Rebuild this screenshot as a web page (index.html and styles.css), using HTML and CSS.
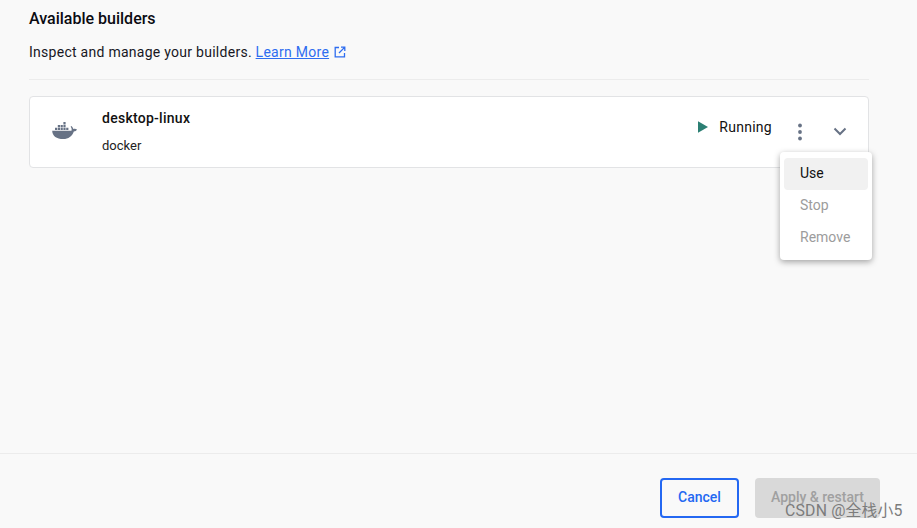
FILE: index.html
```html
<!DOCTYPE html>
<html lang="en">
<head>
<meta charset="utf-8">
<title>Builders</title>
<link rel="stylesheet" href="styles.css">
</head>
<body>
<div class="page">
  <main class="content">
    <h2 class="title">Available builders</h2>
    <p class="intro">Inspect and manage your builders. <a class="link" href="#">Learn More</a> <svg class="ext" viewBox="0 0 12 12" width="12" height="12"><path d="M5 1.500H1.200v9.300h9.300V7M7 1.200h3.800V5M10.600 1.400 5 7" fill="none" stroke="#2e6df0" stroke-width="1.300"/></svg></p>
    <hr class="rule">
    <section class="card">
      <svg class="whale" viewBox="0 0 26 20" width="26" height="21">
        <path fill="#677285" d="M0.200 9.200h19.300c.5-1.600 0-2.900-.9-3.900l.8-.7c1.100.9 1.700 1.800 1.900 3 1.200-.5 2.600-.4 3.700.3-.5 1.200-1.700 1.900-3.200 2-1.600 4.600-5.400 7.600-10.600 7.600C4.600 17.500.4 14.500.2 9.200z"/>
        <path fill="#677285" d="M3 6.200h2.200v2.300H3zM5.800 6.200H8v2.300H5.800zM8.600 6.200h2.200v2.300H8.600zM11.400 6.200h2.200v2.300h-2.200zM14.200 6.200h2.200v2.300h-2.200zM5.800 3.400H8v2.300H5.800zM8.600 3.400h2.200v2.300H8.600zM11.400 3.400h2.200v2.300h-2.200zM11.400.6h2.200v2.300h-2.200z"/>
      </svg>
      <div class="info">
        <div class="name">desktop-linux</div>
        <div class="driver">docker</div>
      </div>
      <div class="status">
        <svg viewBox="0 0 10 12" width="10" height="12"><path fill="#2b7f73" d="M0 .3 10 6 0 11.700z"/></svg>
        <span>Running</span>
      </div>
      <svg class="dots" viewBox="0 0 4 18" width="4" height="18"><circle cx="2" cy="2.500" r="1.900" fill="#677285"/><circle cx="2" cy="9" r="1.900" fill="#677285"/><circle cx="2" cy="15.500" r="1.900" fill="#677285"/></svg>
      <svg class="chev" viewBox="0 0 14 9" width="14" height="9"><path d="M1.500 1.500 7 7l5.500-5.500" fill="none" stroke="#677285" stroke-width="2"/></svg>
      <ul class="menu">
        <li class="item active">Use</li>
        <li class="item off">Stop</li>
        <li class="item off">Remove</li>
      </ul>
    </section>
  </main>
  <footer class="foot">
    <button class="btn cancel">Cancel</button>
    <button class="btn apply">Apply &amp; restart</button>
  </footer>
  <div class="mark">CSDN @全栈小5</div>
</div>
</body>
</html>
```
FILE: styles.css
```css
* { box-sizing: border-box; }
html, body { margin: 0; height: 100%; }
body { background: #f9f9f9; font-family: Roboto, "Noto Sans CJK SC", sans-serif; color: #111; overflow: hidden; }
.page { position: relative; height: 528px; display: flex; flex-direction: column; }
.content { flex: 1; width: 869px; padding: 10px 0 0 29px; }
.title { margin: 0; font-size: 16px; line-height: 18px; font-weight: 500; color: #0b0b12; }
.intro { margin: 15px 0 0; font-size: 14px; line-height: 18px; letter-spacing: .27px; color: #17171f; }
.link { color: #2e6df0; text-decoration: underline; }
.ext { margin-left: 1px; vertical-align: -1px; }
.rule { margin: 18px 0 16px; border: 0; border-top: 1px solid #ececec; }
.card { position: relative; height: 72px; background: #fff; border: 1px solid #e2e3e5; border-radius: 4px; display: flex; align-items: center; padding: 0 21px 0 22px; }
.whale { flex: none; margin-top: -1px; }
.info { margin-left: 24px; flex: 1; }
.name { font-size: 14px; line-height: 18px; font-weight: 500; color: #111; margin-bottom: 10px; margin-top: -1px; letter-spacing: .27px; }
.driver { font-size: 13px; line-height: 18px; color: #222; }
.status { display: flex; align-items: center; gap: 11px; font-size: 14px; line-height: 18px; letter-spacing: .28px; color: #111; margin-top: -10px; }
.dots { margin-left: 26px; margin-top: -1px; }
.chev { margin-left: 31px; margin-top: -1px; }
.menu { position: absolute; left: 750px; top: 55px; width: 92px; height: 108px; margin: 0; padding: 6px 4px; list-style: none; background: #fff; border-radius: 4px; box-shadow: 0 2px 6px rgba(0,0,0,.35); }
.item { height: 32px; line-height: 30px; padding-left: 16px; font-size: 14px; border-radius: 4px; }
.active { background: #f1f1f1; color: #111; }
.off { color: #9c9c9c; }
.foot { height: 75px; border-top: 1px solid #ececec; display: flex; justify-content: flex-end; align-items: flex-start; gap: 16px; padding: 24px 37px 0 0; }
.btn { height: 40px; padding: 0 0 2px; border-radius: 4px; font: 500 14px Roboto, sans-serif; }
.cancel { width: 79px; background: transparent; border: 2px solid #2468f2; color: #2468f2; }
.apply { width: 125px; background: #d9d9d9; border: 0; color: #a0a0a0; }
.mark { position: absolute; left: 785px; top: 502px; font-size: 15.800px; line-height: 18px; color: #7c7c7c; white-space: nowrap; letter-spacing: .2px; }
```
